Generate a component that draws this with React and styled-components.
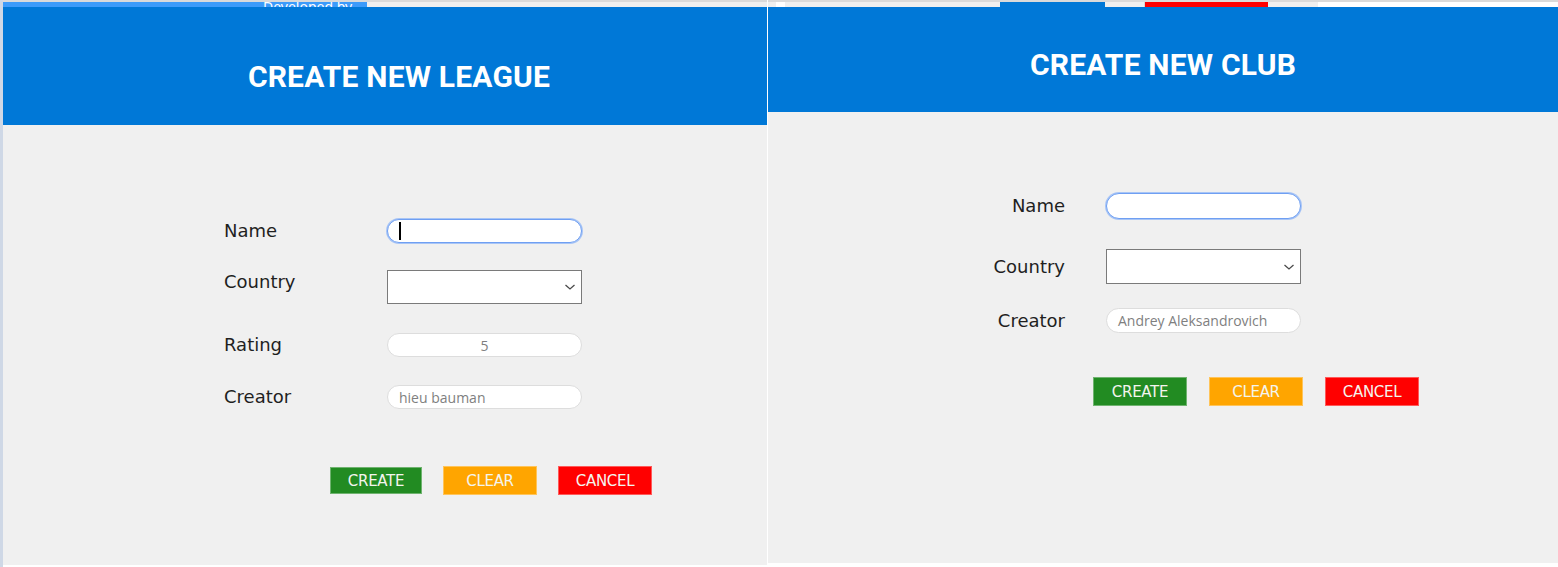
import React from 'react';
import styled, { createGlobalStyle } from 'styled-components';

const GlobalStyle = createGlobalStyle`
  body {
    margin: 0;
    background: #ffffff;
    font-family: "DejaVu Sans", sans-serif;
  }
`

const Page = styled.div`
  display: flex;
  width: 1558px;
  height: 567px;
  overflow: hidden;
  background: #ffffff;
`

const EdgeBar = styled.div`
  width: 3px;
  flex-shrink: 0;
  background: #cfd8e6;
`

const Panel = styled.div`
  display: flex;
  flex-direction: column;
  width: ${props => props.$width}px;
  flex-shrink: 0;
  margin-right: ${props => props.$gapRight || 0}px;
  padding-bottom: ${props => props.$bottom}px;
`

const TopStrip = styled.div`
  display: flex;
  height: 5px;
  border-top: 2px solid #dadada;
  background: ${props => props.$bg || '#efefef'};
  overflow: hidden;
`

const StripPiece = styled.div`
  width: ${props => props.$width}px;
  flex-shrink: 0;
  background: ${props => props.$color};
  box-sizing: border-box;
  border-right: ${props => props.$edge ? '1px solid #d6d6d6' : 'none'};
  overflow: hidden;
`

const StripText = styled.div`
  padding-left: 260px;
  margin-top: -3px;
  font-family: "Noto Sans", sans-serif;
  font-size: 14px;
  line-height: 16px;
  color: #ffffff;
  white-space: nowrap;
`

const Header = styled.div`
  height: ${props => props.$height}px;
  flex-shrink: 0;
  background: #0078d7;
  display: flex;
  align-items: center;
  justify-content: center;
  box-sizing: border-box;
  padding-top: ${props => props.$shiftY}px;
  padding-left: ${props => props.$shiftX || 0}px;
`

const Title = styled.h1`
  margin: 0;
  font-family: Roboto, "Liberation Sans", sans-serif;
  font-weight: 700;
  font-size: 30px;
  letter-spacing: 0.2px;
  color: #ffffff;
`

const Body = styled.div`
  flex: 1;
  background: #f0f0f0;
  padding-top: ${props => props.$top}px;
  padding-left: ${props => props.$left}px;
`

const Form = styled.div`
  display: grid;
  grid-template-columns: ${props => props.$labelWidth}px 195px;
  column-gap: ${props => props.$colGap}px;
  align-items: ${props => props.$align};
  width: max-content;
`

const Label = styled.label`
  font-size: 18px;
  line-height: 24px;
  color: #1f1f1f;
  text-align: ${props => props.$right ? 'right' : 'left'};
  margin-top: ${props => props.$top || 0}px;
`

const TextBox = styled.div`
  display: flex;
  align-items: center;
  box-sizing: border-box;
  height: ${props => props.$height || 24}px;
  margin-top: ${props => props.$top || 0}px;
  padding: 0 11px;
  background: #ffffff;
  border-radius: 13px;
  border: 1px solid ${props => props.$focus ? '#6f9ff2' : '#dddddd'};
  box-shadow: ${props => props.$focus ? '0 0 0 1px #a8c5f6' : 'none'};
  justify-content: ${props => props.$center ? 'center' : 'flex-start'};
  font-family: "Open Sans", sans-serif;
  font-size: 14px;
  color: #7f7f7f;
`

const Caret = styled.span`
  width: 1.5px;
  height: 18px;
  background: #000000;
`

const Select = styled.div`
  display: flex;
  align-items: center;
  justify-content: flex-end;
  box-sizing: border-box;
  height: ${props => props.$height}px;
  margin-top: ${props => props.$top || 0}px;
  padding-right: 5px;
  background: #ffffff;
  border: 1px solid #7a7a7a;
`

const Buttons = styled.div`
  display: flex;
  align-items: center;
  gap: ${props => props.$gap}px;
  margin-top: ${props => props.$top}px;
  margin-left: ${props => props.$left}px;
`

const Button = styled.button`
  width: ${props => props.$width || 94}px;
  height: ${props => props.$height || 29}px;
  padding: 0;
  border: 1px solid rgba(255, 255, 255, 0.35);
  background: ${props => props.$color};
  color: #f4f4ee;
  font-family: "DejaVu Sans", sans-serif;
  font-size: 15px;
  letter-spacing: -0.3px;
  cursor: pointer;
`

function Chevron() {
  return (
    <svg width="12" height="8" viewBox="0 0 12 8">
      <path d="M1.5 2 L6 6 L10.5 2" fill="none" stroke="#4a4a4a" strokeWidth="1.3" />
    </svg>
  )
}

function LeagueForm() {
  return (
    <Panel $width={764} $gapRight={1} $bottom={2}>
      <TopStrip>
        <StripPiece $width={364} $color="#3c9bfa">
          <StripText>Developed by</StripText>
        </StripPiece>
      </TopStrip>
      <Header $height={118} $shiftY={21} $shiftX={28}>
        <Title>CREATE NEW LEAGUE</Title>
      </Header>
      <Body $top={94} $left={221}>
        <Form $labelWidth={163} $colGap={0} $align="start">
          <Label>Name</Label>
          <TextBox $focus><Caret /></TextBox>
          <Label $top={27}>Country</Label>
          <Select $height={34} $top={27}><Chevron /></Select>
          <Label $top={29}>Rating</Label>
          <TextBox $top={29} $center>5</TextBox>
          <Label $top={28}>Creator</Label>
          <TextBox $top={28}>hieu bauman</TextBox>
        </Form>
        <Buttons $gap={21} $top={57} $left={106}>
          <Button $color="#228b22" $width={92} $height={27}>CREATE</Button>
          <Button $color="#ffa500">CLEAR</Button>
          <Button $color="#ff0000">CANCEL</Button>
        </Buttons>
      </Body>
    </Panel>
  )
}

function ClubForm() {
  return (
    <Panel $width={790} $bottom={4}>
      <TopStrip>
        <StripPiece $width={8} $color="#efefef" />
        <StripPiece $width={9} $color="#ffffff" />
        <StripPiece $width={215} $color="#efefef" />
        <StripPiece $width={105} $color="#0078d7" />
        <StripPiece $width={40} $color="#efefef" $edge />
        <StripPiece $width={123} $color="#ff0000" />
        <StripPiece $width={50} $color="#efefef" />
        <StripPiece $width={240} $color="#ffffff" />
      </TopStrip>
      <Header $height={105} $shiftY={9}>
        <Title>CREATE NEW CLUB</Title>
      </Header>
      <Body $top={81} $left={177}>
        <Form $labelWidth={120} $colGap={41} $align="center">
          <Label $right>Name</Label>
          <TextBox $focus $height={26} />
          <Label $right $top={30}>Country</Label>
          <Select $height={35} $top={30}><Chevron /></Select>
          <Label $right $top={24}>Creator</Label>
          <TextBox $top={24} $height={25}>Andrey Aleksandrovich</TextBox>
        </Form>
        <Buttons $gap={22} $top={44} $left={148}>
          <Button $color="#228b22">CREATE</Button>
          <Button $color="#ffa500">CLEAR</Button>
          <Button $color="#ff0000">CANCEL</Button>
        </Buttons>
      </Body>
    </Panel>
  )
}

export default function App() {
  return (
    <>
      <GlobalStyle />
      <Page>
        <EdgeBar />
        <LeagueForm />
        <ClubForm />
      </Page>
    </>
  )
}
